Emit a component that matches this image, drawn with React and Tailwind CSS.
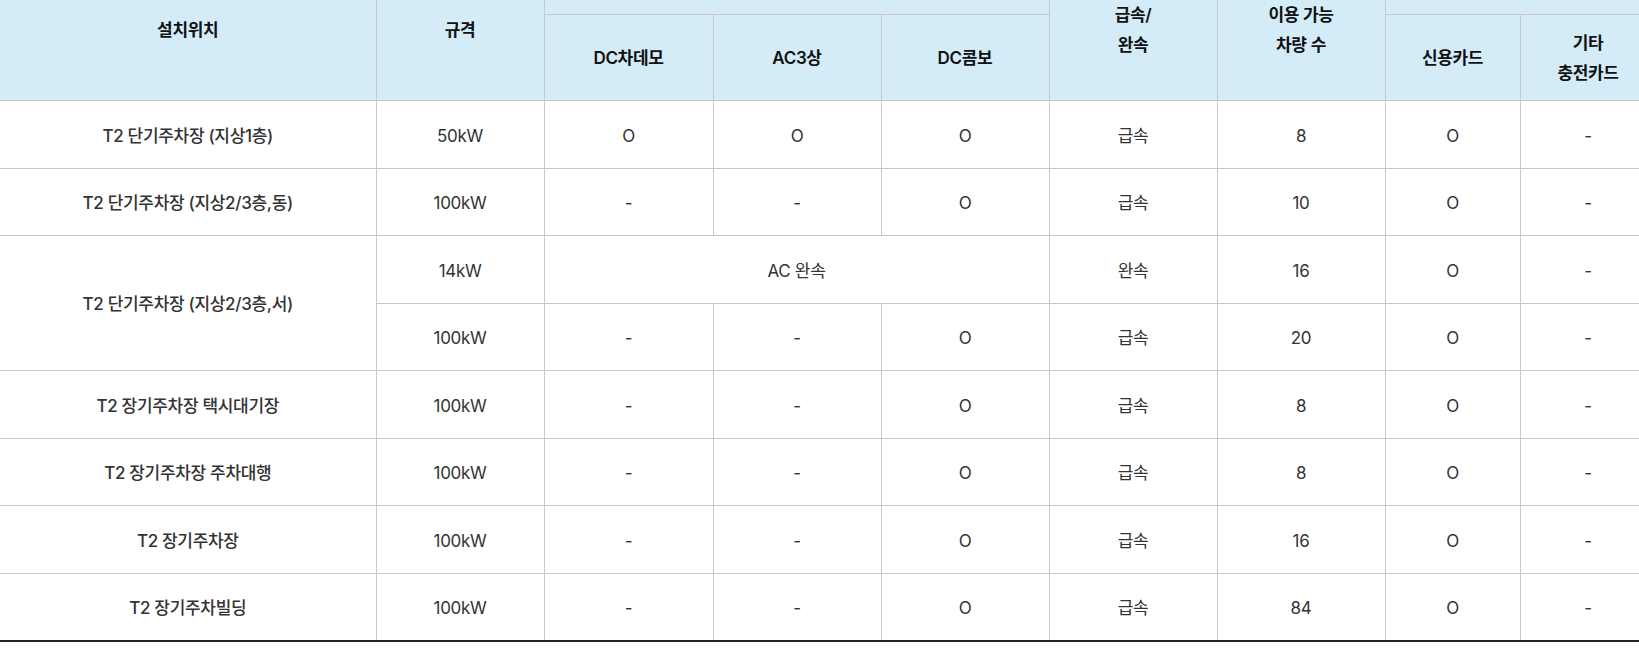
import React from 'react';

const rows = [
  { place: 'T2 단기주차장 (지상1층)', spec: '50kW', chademo: 'O', ac3: 'O', combo: 'O', speed: '급속', count: '8', card: 'O', etc: '-' },
  { place: 'T2 단기주차장 (지상2/3층,동)', spec: '100kW', chademo: '-', ac3: '-', combo: 'O', speed: '급속', count: '10', card: 'O', etc: '-' },
  { place: 'T2 단기주차장 (지상2/3층,서)', spec: '14kW', acSlow: 'AC 완속', speed: '완속', count: '16', card: 'O', etc: '-', span: 2 },
  { place: null, spec: '100kW', chademo: '-', ac3: '-', combo: 'O', speed: '급속', count: '20', card: 'O', etc: '-' },
  { place: 'T2 장기주차장 택시대기장', spec: '100kW', chademo: '-', ac3: '-', combo: 'O', speed: '급속', count: '8', card: 'O', etc: '-' },
  { place: 'T2 장기주차장 주차대행', spec: '100kW', chademo: '-', ac3: '-', combo: 'O', speed: '급속', count: '8', card: 'O', etc: '-' },
  { place: 'T2 장기주차장', spec: '100kW', chademo: '-', ac3: '-', combo: 'O', speed: '급속', count: '16', card: 'O', etc: '-' },
  { place: 'T2 장기주차빌딩', spec: '100kW', chademo: '-', ac3: '-', combo: 'O', speed: '급속', count: '84', card: 'O', etc: '-' },
];

const th = 'border border-[#c8c8c8] bg-[#d4ebf8] font-semibold text-[#111] text-[17px] leading-[30px] text-center align-middle';
const td = 'border border-[#c8c8c8] text-center align-middle text-[17px] text-[#333] h-[67.5px] pt-1';

function App() {
  return (
    <div className="w-[1639px] h-[651px] overflow-hidden bg-white" style={{ fontFamily: 'Inter, "Noto Sans CJK KR", sans-serif' }}>
      <table className="-mt-[41px] w-[1656px] table-fixed border-collapse border-b-2 border-b-[#222] border-l-0 tracking-[-0.02em]">
        <colgroup>
          <col className="w-[376px]" />
          <col className="w-[168px]" />
          <col className="w-[169px]" />
          <col className="w-[168px]" />
          <col className="w-[168px]" />
          <col className="w-[168px]" />
          <col className="w-[168px]" />
          <col className="w-[135px]" />
          <col className="w-[136px]" />
        </colgroup>
        <thead>
          <tr className="h-[55px]">
            <th rowSpan={2} className={`${th} border-l-0`}>설치위치</th>
            <th rowSpan={2} className={th}>규격</th>
            <th colSpan={3} className={th}></th>
            <th rowSpan={2} className={th}>급속/<br />완속</th>
            <th rowSpan={2} className={th}>이용 가능<br />차량 수</th>
            <th colSpan={2} className={th}></th>
          </tr>
          <tr className="h-[86px]">
            <th className={th}>DC차데모</th>
            <th className={th}>AC3상</th>
            <th className={th}>DC콤보</th>
            <th className={th}>신용카드</th>
            <th className={th}>기타<br />충전카드</th>
          </tr>
        </thead>
        <tbody>
          {rows.map((r, i) => (
            <tr key={i}>
              {r.place !== null && (
                <td rowSpan={r.span || 1} className={`${td} border-l-0 font-medium text-[#111]`}>{r.place}</td>
              )}
              <td className={td}>{r.spec}</td>
              {r.acSlow ? (
                <td colSpan={3} className={td}>{r.acSlow}</td>
              ) : (
                <>
                  <td className={td}>{r.chademo}</td>
                  <td className={td}>{r.ac3}</td>
                  <td className={td}>{r.combo}</td>
                </>
              )}
              <td className={td}>{r.speed}</td>
              <td className={td}>{r.count}</td>
              <td className={td}>{r.card}</td>
              <td className={td}>{r.etc}</td>
            </tr>
          ))}
        </tbody>
      </table>
    </div>
  );
}

export default App;
